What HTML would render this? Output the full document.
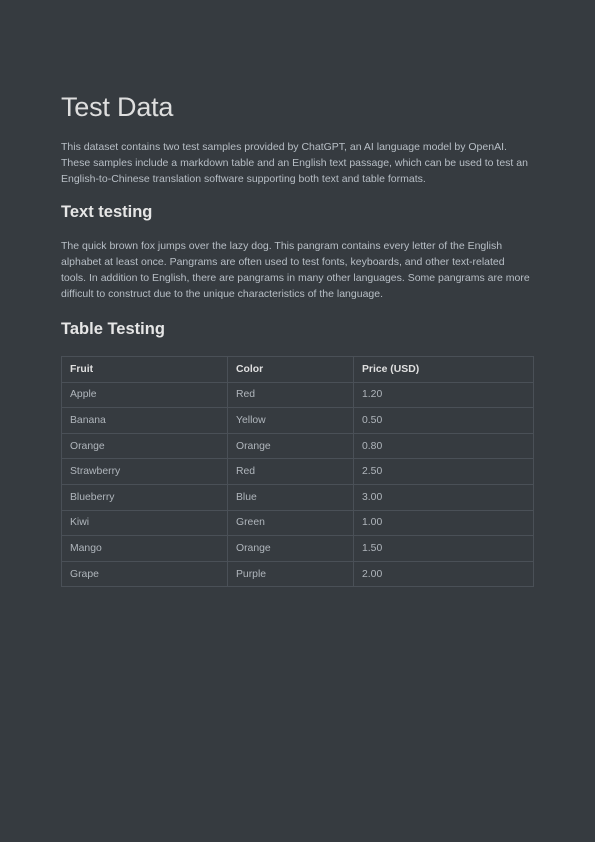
<!DOCTYPE html>
<html><head><style>
body{margin:0;width:595px;height:842px;background:#363b40;font-family:"Liberation Sans",sans-serif;color:#b8bfc6;position:relative;overflow:hidden}
.a{position:absolute;left:61px;margin:0}
h1{font-size:27px;color:#dedede;top:92px;font-weight:normal;letter-spacing:-0.2px}
h2{font-size:16.5px;color:#e6e6e6;font-weight:bold}
p{font-size:10.5px;line-height:16px;width:470px}
table{position:absolute;left:61px;top:356px;width:473px;border-collapse:collapse;font-size:10.4px}
td,th{border:1px solid #4a5057;height:24.6px;padding:0 0 0 8px;text-align:left;color:#b0b6bc}
th{color:#e0e0e0;font-weight:bold}
</style></head><body>
<h1 class="a">Test Data</h1>
<p class="a" style="top:139px">This dataset contains two test samples provided by ChatGPT, an AI language model by OpenAI. These samples include a markdown table and an English text passage, which can be used to test an English-to-Chinese translation software supporting both text and table formats.</p>
<h2 class="a" style="top:203px">Text testing</h2>
<p class="a" style="top:238px">The quick brown fox jumps over the lazy dog. This pangram contains every letter of the English alphabet at least once. Pangrams are often used to test fonts, keyboards, and other text-related tools. In addition to English, there are pangrams in many other languages. Some pangrams are more difficult to construct due to the unique characteristics of the language.</p>
<h2 class="a" style="top:320px">Table Testing</h2>
<table>
<tr><th style="width:157px">Fruit</th><th style="width:117px">Color</th><th>Price (USD)</th></tr>
<tr><td>Apple</td><td>Red</td><td>1.20</td></tr>
<tr><td>Banana</td><td>Yellow</td><td>0.50</td></tr>
<tr><td>Orange</td><td>Orange</td><td>0.80</td></tr>
<tr><td>Strawberry</td><td>Red</td><td>2.50</td></tr>
<tr><td>Blueberry</td><td>Blue</td><td>3.00</td></tr>
<tr><td>Kiwi</td><td>Green</td><td>1.00</td></tr>
<tr><td>Mango</td><td>Orange</td><td>1.50</td></tr>
<tr><td>Grape</td><td>Purple</td><td>2.00</td></tr>
</table>
</body></html>
